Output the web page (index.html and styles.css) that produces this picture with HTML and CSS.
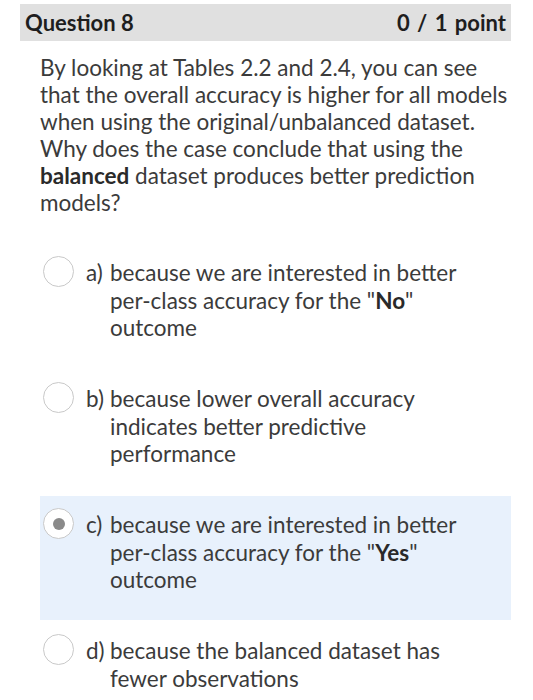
FILE: index.html
```html
<!DOCTYPE html>
<html>
<head>
<meta charset="utf-8">
<link rel="stylesheet" href="styles.css">
</head>
<body>
<div class="page">
  <div class="header">
    <span class="title">Question 8</span>
    <span class="score">0 / 1 point</span>
  </div>
  <div class="content">
    <p class="question">By looking at Tables 2.2 and 2.4, you can see that the overall accuracy is higher for all models when using the original/unbalanced dataset. Why does the case conclude that using the <b>balanced</b> dataset produces better prediction models?</p>
    <div class="options">
      <div class="option">
        <span class="radio"></span>
        <span class="label">a)</span>
        <span class="text">because we are interested in better per-class accuracy for the "<b>No</b>" outcome</span>
      </div>
      <div class="option">
        <span class="radio"></span>
        <span class="label">b)</span>
        <span class="text">because lower overall accuracy indicates better predictive performance</span>
      </div>
      <div class="option selected">
        <span class="radio checked"></span>
        <span class="label">c)</span>
        <span class="text">because we are interested in better per-class accuracy for the "<b>Yes</b>" outcome</span>
      </div>
      <div class="option">
        <span class="radio"></span>
        <span class="label">d)</span>
        <span class="text">because the balanced dataset has fewer observations</span>
      </div>
    </div>
  </div>
</div>
</body>
</html>
```

FILE: styles.css
```css
html, body {
  margin: 0;
  padding: 0;
  background: #ffffff;
  overflow: hidden;
}
body {
  font-family: Lato, "Open Sans", sans-serif;
  color: #3b3b3b;
}
.page {
  width: 491px;
  margin-left: 20px;
  padding-top: 4px;
}
.header {
  display: flex;
  justify-content: space-between;
  align-items: center;
  height: 37px;
  background: #e0e0e0;
  padding: 0 5px;
  font-weight: bold;
  font-size: 22px;
  color: #1e1e1e;
}
.score {
  word-spacing: 2px;
}
.content {
  padding-left: 20px;
}
.question {
  margin: 13px 0 0 0;
  font-size: 22.5px;
  line-height: 27px;
  color: #3b3b3b;
}
.question b {
  color: #2a2a2a;
}
.options {
  margin-top: 28px;
  display: flex;
  flex-direction: column;
  gap: 2px;
}
.option {
  display: flex;
  align-items: flex-start;
  height: 124px;
  box-sizing: border-box;
  padding-top: 12px;
  font-size: 22.5px;
  line-height: 27.5px;
}
.option.selected {
  background: #e8f1fc;
}
.radio {
  flex: none;
  width: 29px;
  height: 29px;
  border: 1.5px solid #c9c9c9;
  border-radius: 50%;
  background: #fff;
  margin-left: 3px;
  display: flex;
  align-items: center;
  justify-content: center;
}
.radio.checked::after {
  content: "";
  width: 12px;
  height: 12px;
  border-radius: 50%;
  background: #8a8a8a;
}
.label {
  flex: none;
  width: 24px;
  margin-left: 12px;
  padding-top: 3px;
}
.text {
  flex: 1;
  padding-top: 3px;
  padding-right: 31px;
}
.text b {
  color: #2a2a2a;
}
```
